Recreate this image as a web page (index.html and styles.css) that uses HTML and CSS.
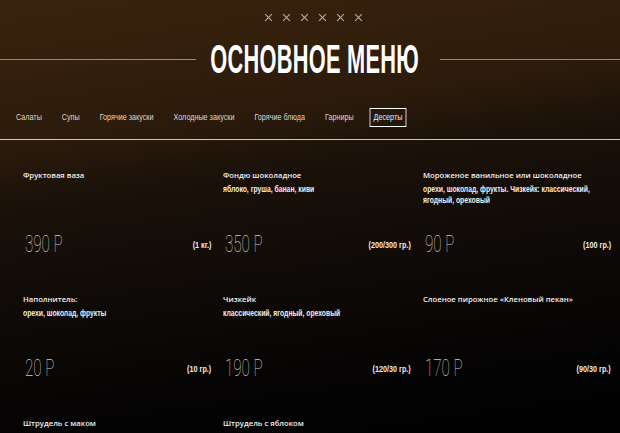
FILE: index.html
```html
<!DOCTYPE html>
<html lang="ru">
<head>
<meta charset="utf-8">
<title>Основное меню</title>
<link rel="stylesheet" href="styles.css">
</head>
<body>
<div class="page">
  <header class="header">
    <div class="marks">
      <svg class="mark" viewBox="0 0 8 8"><path d="M1 1L7 7M7 1L1 7"/></svg>
      <svg class="mark" viewBox="0 0 8 8"><path d="M1 1L7 7M7 1L1 7"/></svg>
      <svg class="mark" viewBox="0 0 8 8"><path d="M1 1L7 7M7 1L1 7"/></svg>
      <svg class="mark" viewBox="0 0 8 8"><path d="M1 1L7 7M7 1L1 7"/></svg>
      <svg class="mark" viewBox="0 0 8 8"><path d="M1 1L7 7M7 1L1 7"/></svg>
      <svg class="mark" viewBox="0 0 8 8"><path d="M1 1L7 7M7 1L1 7"/></svg>
    </div>
    <div class="title-row">
      <span class="rule rule-left"></span>
      <h1 class="title"><span class="title-text">ОСНОВНОЕ МЕНЮ</span></h1>
      <span class="rule rule-right"></span>
    </div>
    <nav class="tabs">
      <a class="tab">Салаты</a>
      <a class="tab">Супы</a>
      <a class="tab">Горячие закуски</a>
      <a class="tab">Холодные закуски</a>
      <a class="tab">Горячие блюда</a>
      <a class="tab">Гарниры</a>
      <a class="tab tab-active">Десерты</a>
    </nav>
  </header>
  <main class="menu">
    <div class="item">
      <div class="name">Фруктовая ваза</div>
      <div class="bottom"><span class="price"><span class="price-text">390 Р</span></span><span class="weight">(1 кг.)</span></div>
    </div>
    <div class="item">
      <div class="name">Фондю шоколадное</div>
      <div class="desc">яблоко, груша, банан, киви</div>
      <div class="bottom"><span class="price"><span class="price-text">350 Р</span></span><span class="weight">(200/300 гр.)</span></div>
    </div>
    <div class="item">
      <div class="name">Мороженое ванильное или шоколадное</div>
      <div class="desc">орехи, шоколад, фрукты. Чизкейк: классический, ягодный, ореховый</div>
      <div class="bottom"><span class="price"><span class="price-text">90 Р</span></span><span class="weight">(100 гр.)</span></div>
    </div>
    <div class="item">
      <div class="name">Наполнитель:</div>
      <div class="desc">орехи, шоколад, фрукты</div>
      <div class="bottom"><span class="price"><span class="price-text">20 Р</span></span><span class="weight">(10 гр.)</span></div>
    </div>
    <div class="item">
      <div class="name">Чизкейк</div>
      <div class="desc">классический, ягодный, ореховый</div>
      <div class="bottom"><span class="price"><span class="price-text">190 Р</span></span><span class="weight">(120/30 гр.)</span></div>
    </div>
    <div class="item">
      <div class="name">Слоеное пирожное «Кленовый пекан»</div>
      <div class="bottom"><span class="price"><span class="price-text">170 Р</span></span><span class="weight">(90/30 гр.)</span></div>
    </div>
    <div class="item">
      <div class="name">Штрудель с маком</div>
    </div>
    <div class="item">
      <div class="name">Штрудель с яблоком</div>
    </div>
  </main>
</div>
</body>
</html>
```
FILE: styles.css
```css
* { box-sizing: border-box; }
html, body { margin: 0; padding: 0; }
body {
  width: 620px;
  height: 433px;
  overflow: hidden;
  background: linear-gradient(172deg, #3a230d 0%, #2c1b0b 28%, #1a1109 40%, #0e0a07 62%, #040303 85%, #010101 100%);
  font-family: "Liberation Sans", Arial, sans-serif;
  color: #fff;
}
.page { width: 620px; height: 433px; overflow: hidden; }
.header {
  padding-top: 13px;
  border-bottom: 1px solid #cdc6bf;
}
.marks {
  display: flex;
  justify-content: center;
  gap: 9px;
  padding-left: 6px;
  height: 9px;
}
.mark {
  width: 9px;
  height: 9px;
  stroke: #b3aaa2;
  stroke-width: 1;
  fill: none;
}
.title-row {
  display: flex;
  align-items: center;
  margin-top: 19px;
  height: 36px;
}
.rule {
  height: 1px;
  background: #958a80;
}
.rule-left { width: 196px; }
.rule-right { flex: 1; }
.title {
  margin: 0;
  width: 244px;
  display: flex;
  justify-content: center;
  font-size: 40px;
  line-height: 36px;
  font-weight: 700;
  white-space: nowrap;
  padding-right: 6px;
}
.title-text {
  display: inline-block;
  transform: scaleX(0.545);
  letter-spacing: 0.5px;
}
.tabs {
  display: flex;
  align-items: center;
  gap: 15px;
  width: 775px;
  padding-left: 15px;
  margin-top: 31px;
  margin-bottom: 12px;
  height: 19px;
  transform: scaleX(0.8);
  transform-origin: left center;
}
.tab {
  font-size: 9px;
  color: #dcd7d2;
  padding: 3px 4px;
  line-height: 11px;
  border: 1px solid transparent;
  white-space: nowrap;
}
.tab-active {
  border-color: #ffffff;
  color: #ece8e4;
}
.menu {
  display: grid;
  grid-template-columns: 188px 188px 188px;
  column-gap: 12px;
  row-gap: 36px;
  padding: 29px 0 0 23px;
}
.item {
  display: flex;
  flex-direction: column;
  height: 88px;
}
.name {
  font-family: "Open Sans", sans-serif;
  font-weight: 600;
  font-size: 7.7px;
  line-height: 12px;
  color: #f2efec;
  white-space: nowrap;
}
.desc {
  margin-top: 3px;
  width: 235px;
  font-weight: 700;
  font-size: 8.5px;
  line-height: 11px;
  color: #f2eeea;
  transform: scaleX(0.8);
  transform-origin: left top;
}
.bottom {
  margin-top: auto;
  display: flex;
  align-items: center;
  justify-content: space-between;
  height: 24px;
}
.price {
  font-family: Roboto, "Liberation Sans", sans-serif;
  font-weight: 100;
  font-size: 23px;
  line-height: 24px;
  color: #d2cdc8;
  width: 60px;
  white-space: nowrap;
}
.price-text {
  display: inline-block;
  transform: scaleX(0.66);
  transform-origin: left center;
  padding-left: 3px;
}
.weight {
  display: inline-block;
  font-weight: 700;
  font-size: 9px;
  color: #f0ece8;
  white-space: nowrap;
  transform: scaleX(0.8);
  transform-origin: right center;
}
```
